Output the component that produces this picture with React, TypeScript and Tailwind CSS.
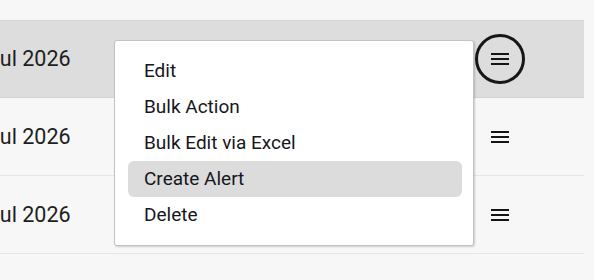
const rows = [
  { date: "Jul 2026", active: true },
  { date: "Jul 2026", active: false },
  { date: "Jul 2026", active: false },
];

const menuItems = ["Edit", "Bulk Action", "Bulk Edit via Excel", "Create Alert", "Delete"];

function MenuIcon() {
  return (
    <svg width="24" height="24" viewBox="0 0 24 24" fill="#141414">
      <path d="M3 18h18v-2H3v2zm0-5h18v-2H3v2zm0-7v2h18V6H3z" />
    </svg>
  );
}

export default function App() {
  return (
    <div
      className="relative w-[594px] h-[280px] overflow-hidden bg-[#f7f7f7] text-[#1e1e1e]"
      style={{ fontFamily: "Roboto, 'Noto Sans', sans-serif" }}
    >
      <div className="h-[20px]" />
      <div className="w-[584px]">
        {rows.map((row, i) => (
          <div
            key={i}
            className={`flex items-center h-[78px] border-b ${
              row.active
                ? "bg-[#dddddd] border-[#d2d2d2] border-t border-t-[#d6d6d6]"
                : "border-[#e6e6e6]"
            }`}
          >
            <div className="-ml-[12px] text-[21.5px] leading-none">{row.date}</div>
            <div className="ml-auto mr-[59px] flex items-center justify-center w-[50px] h-[50px]">
              {row.active ? (
                <div className="flex items-center justify-center w-[50px] h-[50px] rounded-full border-[3px] border-[#161616]">
                  <MenuIcon />
                </div>
              ) : (
                <MenuIcon />
              )}
            </div>
          </div>
        ))}
      </div>

      {/* dropdown menu */}
      <div className="absolute left-[114px] top-[40px] w-[360px] rounded-[3px] border border-[#c2c2c2] bg-white py-[12px] pl-[13px] pr-[11px] shadow-[1px_1px_2px_rgba(0,0,0,0.18)]">
        {menuItems.map((item) => (
          <div
            key={item}
            className={`flex items-center h-[36px] px-4 rounded-[6px] text-[19px] text-[#16161c] ${
              item === "Create Alert" ? "bg-[#dcdcdc]" : ""
            }`}
          >
            {item}
          </div>
        ))}
      </div>
    </div>
  );
}
